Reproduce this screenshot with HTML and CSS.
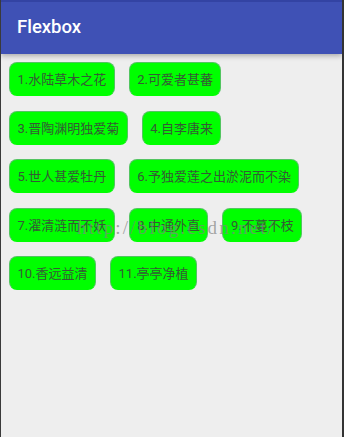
FILE: index.html
```html
<!DOCTYPE html>
<html>
<head>
<meta charset="utf-8">
<link rel="stylesheet" href="styles.css">
</head>
<body>
<div class="screen">
  <header class="toolbar">
    <div class="status"></div>
    <div class="bar"><span class="title">Flexbox</span></div>
  </header>
  <main class="content">
    <div class="chips">
      <span class="chip">1.水陆草木之花</span>
      <span class="chip">2.可爱者甚蕃</span>
      <span class="chip">3.晋陶渊明独爱菊</span>
      <span class="chip">4.自李唐来</span>
      <span class="chip">5.世人甚爱牡丹</span>
      <span class="chip">6.予独爱莲之出淤泥而不染</span>
      <span class="chip">7.濯清涟而不妖</span>
      <span class="chip">8.中通外直</span>
      <span class="chip">9.不蔓不枝</span>
      <span class="chip">10.香远益清</span>
      <span class="chip">11.亭亭净植</span>
    </div>
    <div class="watermark">http://blog.csdn.net/</div>
  </main>
</div>
</body>
</html>
```

FILE: styles.css
```css
html, body {
  margin: 0;
  padding: 0;
  background: #eeeeee;
}
.screen {
  width: 344px;
  height: 437px;
  box-sizing: border-box;
  border-left: 1px solid #3a3a3a;
  border-right: 2px solid #333333;
  background: #eeeeee;
  display: flex;
  flex-direction: column;
  overflow: hidden;
}
.toolbar {
  position: relative;
  z-index: 1;
  box-shadow: 0 2px 5px rgba(0,0,0,0.28);
}
.status {
  height: 2px;
  background: #3343a3;
}
.bar {
  height: 52px;
  background: #3f51b5;
  display: flex;
  align-items: center;
  padding-left: 16px;
}
.title {
  color: #ffffff;
  font-family: Roboto, "Noto Sans", sans-serif;
  font-weight: 500;
  font-size: 18.5px;
  margin-top: -2px;
}
.content {
  position: relative;
  flex: 1;
  padding: 8px 8px 0 8px;
}
.chips {
  display: flex;
  flex-wrap: wrap;
  column-gap: 14px;
  row-gap: 14.5px;
}
.chip {
  display: flex;
  align-items: center;
  height: 34px;
  box-sizing: border-box;
  padding: 0 7.5px 1px 7.5px;
  background: #00ff00;
  border: 1px solid rgba(150,150,175,0.55);
  border-bottom-color: rgba(0,255,0,1);
  border-radius: 8px;
  font-family: Roboto, "Noto Sans CJK SC", sans-serif;
  font-size: 13px;
  color: #355a35;
  white-space: nowrap;
}
.watermark {
  position: absolute;
  left: 76px;
  top: 163px;
  font-family: "Liberation Serif", serif;
  font-size: 19px;
  letter-spacing: 2.2px;
  color: rgba(130,130,130,0.7);
  pointer-events: none;
  white-space: nowrap;
}
```
